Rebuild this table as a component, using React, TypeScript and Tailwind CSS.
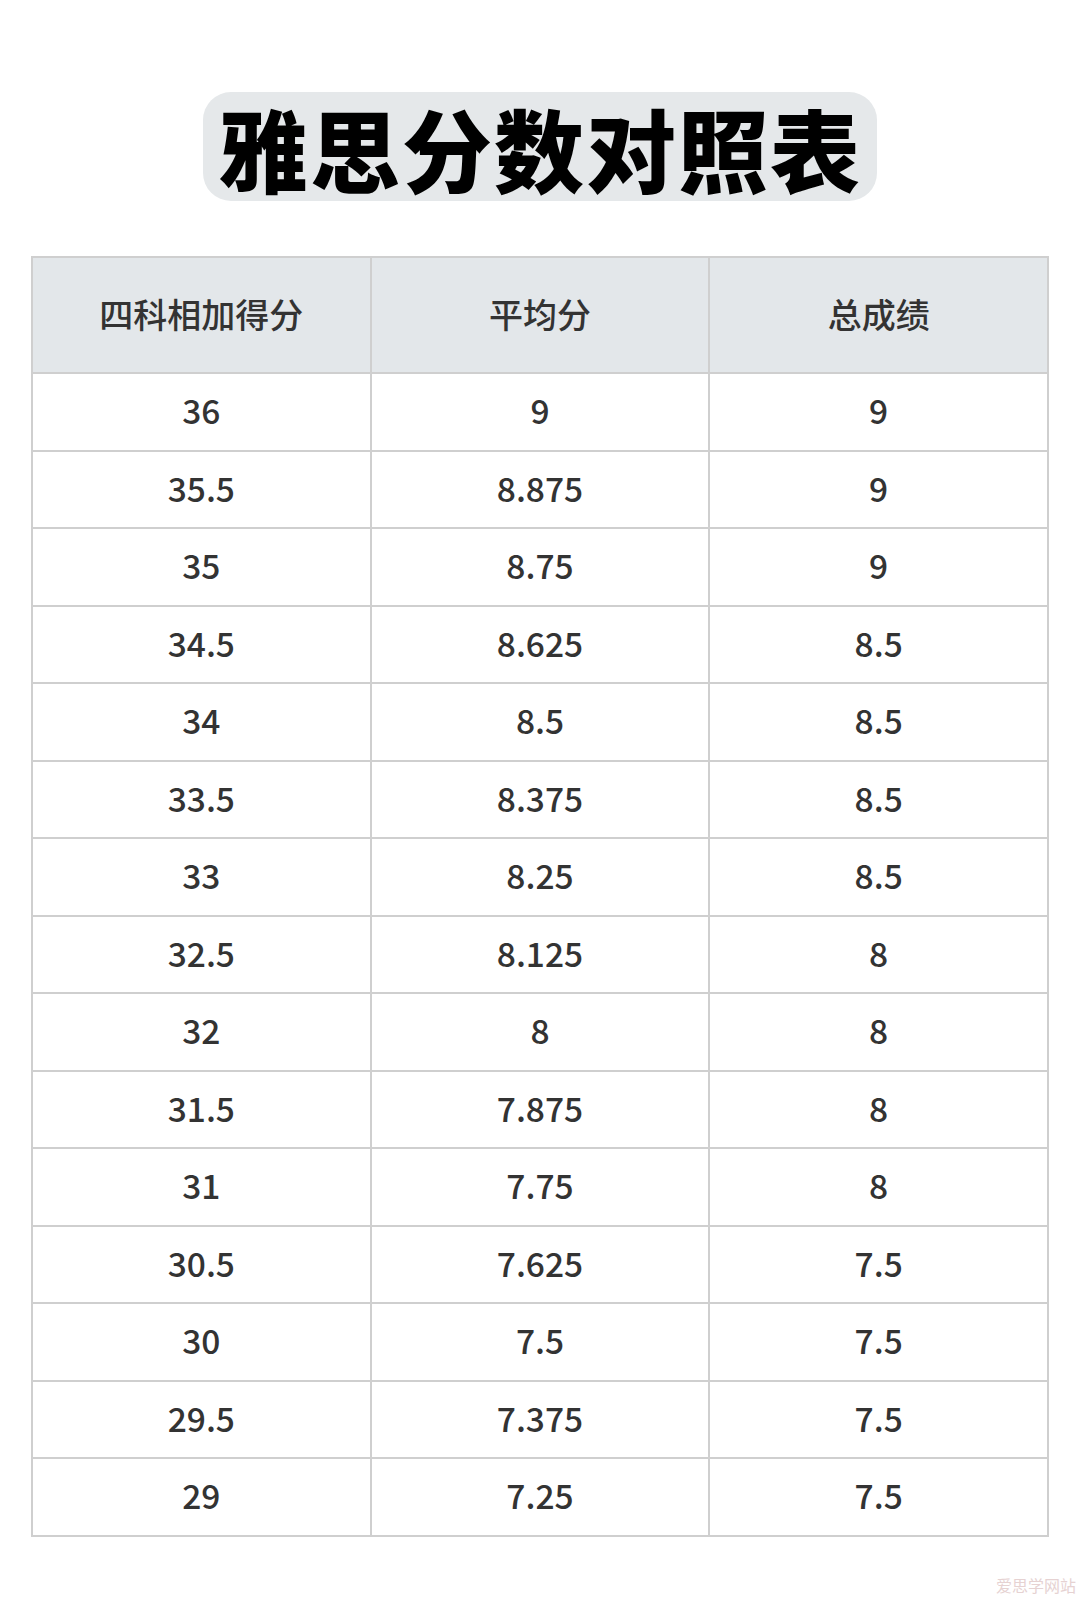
import React from "react";

const rows: [string, string, string][] = [
  ["36", "9", "9"],
  ["35.5", "8.875", "9"],
  ["35", "8.75", "9"],
  ["34.5", "8.625", "8.5"],
  ["34", "8.5", "8.5"],
  ["33.5", "8.375", "8.5"],
  ["33", "8.25", "8.5"],
  ["32.5", "8.125", "8"],
  ["32", "8", "8"],
  ["31.5", "7.875", "8"],
  ["31", "7.75", "8"],
  ["30.5", "7.625", "7.5"],
  ["30", "7.5", "7.5"],
  ["29.5", "7.375", "7.5"],
  ["29", "7.25", "7.5"],
];

const font = { fontFamily: '"Noto Sans CJK SC", "Noto Sans", sans-serif' };

export default function App() {
  return (
    <div className="w-[1080px] h-[1600px] bg-white relative" style={font}>
      <div className="flex justify-center pt-[92px]">
        <div className="w-[674px] h-[109px] rounded-[28px] bg-[#e5e8ea] flex items-center justify-center">
          <span className="text-[90px] leading-none font-black text-black tracking-[2px]">雅思分数对照表</span>
        </div>
      </div>
      <div className="ml-[31px] mt-[55px] w-[1018px] border-l-2 border-t-2 border-[#cfcfcf]">
        <div className="grid grid-cols-3 h-[116px] bg-[#e3e7ea]">
          {["四科相加得分", "平均分", "总成绩"].map((h) => (
            <div key={h} className="flex items-center justify-center pb-[4px] border-r-2 border-b-2 border-[#cfcfcf] text-[34px] font-medium text-[#333]">
              {h}
            </div>
          ))}
        </div>
        {rows.map((r, i) => (
          <div key={i} className="grid grid-cols-3 h-[77.5px]">
            {r.map((c, j) => (
              <div key={j} className="flex items-center justify-center pb-[3px] border-r-2 border-b-2 border-[#cfcfcf] text-[33.5px] font-medium text-[#333]">
                {c}
              </div>
            ))}
          </div>
        ))}
      </div>
      <div className="absolute right-[4px] bottom-[3px] text-[16px] text-[#e6d2d2]">爱思学网站</div>
    </div>
  );
}
